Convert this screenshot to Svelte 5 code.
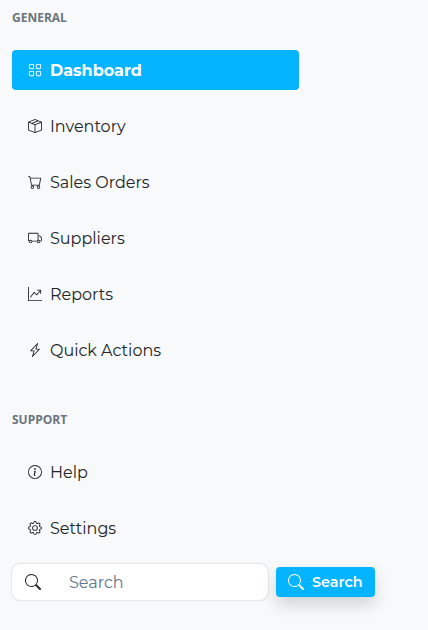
<script>
  const icons = {
    grid: 'M1 2.5A1.5 1.5 0 0 1 2.5 1h3A1.5 1.5 0 0 1 7 2.5v3A1.5 1.5 0 0 1 5.5 7h-3A1.5 1.5 0 0 1 1 5.5zM2.5 2a.5.5 0 0 0-.5.5v3a.5.5 0 0 0 .5.5h3a.5.5 0 0 0 .5-.5v-3a.5.5 0 0 0-.5-.5zm6.5.5A1.5 1.5 0 0 1 10.5 1h3A1.5 1.5 0 0 1 15 2.5v3A1.5 1.5 0 0 1 13.5 7h-3A1.5 1.5 0 0 1 9 5.5zm1.5-.5a.5.5 0 0 0-.5.5v3a.5.5 0 0 0 .5.5h3a.5.5 0 0 0 .5-.5v-3a.5.5 0 0 0-.5-.5zM1 10.5A1.5 1.5 0 0 1 2.5 9h3A1.5 1.5 0 0 1 7 10.5v3A1.5 1.5 0 0 1 5.5 15h-3A1.5 1.5 0 0 1 1 13.5zm1.5-.5a.5.5 0 0 0-.5.5v3a.5.5 0 0 0 .5.5h3a.5.5 0 0 0 .5-.5v-3a.5.5 0 0 0-.5-.5zm6.5.5A1.5 1.5 0 0 1 10.5 9h3a1.5 1.5 0 0 1 1.5 1.5v3a1.5 1.5 0 0 1-1.5 1.5h-3A1.5 1.5 0 0 1 9 13.5zm1.5-.5a.5.5 0 0 0-.5.5v3a.5.5 0 0 0 .5.5h3a.5.5 0 0 0 .5-.5v-3a.5.5 0 0 0-.5-.5z',
    box: 'M8.186 1.113a.5.5 0 0 0-.372 0L1.846 3.5l2.404.961L10.404 2zm3.564 1.426L5.596 5 8 5.961 14.154 3.5zm3.25 1.7-6.5 2.6v7.922l6.5-2.6V4.24zM7.5 14.762V6.838L1 4.239v7.923zM7.443.184a1.5 1.5 0 0 1 1.114 0l7.129 2.852A.5.5 0 0 1 16 3.5v8.662a1 1 0 0 1-.629.928l-7.185 2.874a.5.5 0 0 1-.372 0L.63 13.09a1 1 0 0 1-.63-.928V3.5a.5.5 0 0 1 .314-.464z',
    cart: 'M0 1.5A.5.5 0 0 1 .5 1H2a.5.5 0 0 1 .485.379L2.89 3H14.5a.5.5 0 0 1 .491.592l-1.5 8A.5.5 0 0 1 13 12H4a.5.5 0 0 1-.491-.408L2.01 3.607 1.61 2H.5a.5.5 0 0 1-.5-.5M3.102 4l1.313 7h8.17l1.313-7zM5 12a2 2 0 1 0 0 4 2 2 0 0 0 0-4m7 0a2 2 0 1 0 0 4 2 2 0 0 0 0-4m-7 1a1 1 0 1 1 0 2 1 1 0 0 1 0-2m7 0a1 1 0 1 1 0 2 1 1 0 0 1 0-2',
    truck: 'M0 3.5A1.5 1.5 0 0 1 1.5 2h9A1.5 1.5 0 0 1 12 3.5V5h1.02a1.5 1.5 0 0 1 1.17.563l1.481 1.85a1.5 1.5 0 0 1 .329.938V10.5a1.5 1.5 0 0 1-1.5 1.5H14a2 2 0 1 1-4 0H5a2 2 0 1 1-3.998-.085A1.5 1.5 0 0 1 0 10.5zm1.294 7.456A2 2 0 0 1 4.732 11h5.536a2 2 0 0 1 .732-.732V3.5a.5.5 0 0 0-.5-.5h-9a.5.5 0 0 0-.5.5v7a.5.5 0 0 0 .294.456M12 10a2 2 0 0 1 1.732 1h.768a.5.5 0 0 0 .5-.5V8.35a.5.5 0 0 0-.11-.312l-1.48-1.85A.5.5 0 0 0 13.02 6H12zm-9 1a1 1 0 1 0 0 2 1 1 0 0 0 0-2m9 0a1 1 0 1 0 0 2 1 1 0 0 0 0-2',
    graph: 'M0 0h1v15h15v1H0zm10 3.5a.5.5 0 0 1 .5-.5h4a.5.5 0 0 1 .5.5v4a.5.5 0 0 1-1 0V4.9l-3.613 4.417a.5.5 0 0 1-.74.037L7.06 6.767l-3.656 5.027a.5.5 0 0 1-.808-.588l4-5.5a.5.5 0 0 1 .758-.06l2.609 2.61L13.445 4H10.5a.5.5 0 0 1-.5-.5',
    bolt: 'M11.251.068a.5.5 0 0 1 .227.58L9.677 6.5H13a.5.5 0 0 1 .364.843l-8 8.5a.5.5 0 0 1-.842-.49L6.323 9.5H3a.5.5 0 0 1-.364-.843l8-8.5a.5.5 0 0 1 .615-.09zM4.157 8.5H7a.5.5 0 0 1 .478.647L6.11 13.59l5.732-6.09H9a.5.5 0 0 1-.478-.647L9.89 2.41z',
    info: 'M8 15A7 7 0 1 1 8 1a7 7 0 0 1 0 14m0 1A8 8 0 1 0 8 0a8 8 0 0 0 0 16M8.93 6.588l-2.29.287-.082.38.45.083c.294.07.352.176.288.469l-.738 3.468c-.194.897.105 1.319.808 1.319.545 0 1.178-.252 1.465-.598l.088-.416c-.2.176-.492.246-.686.246-.275 0-.375-.193-.304-.533zM9 4.5a1 1 0 1 1-2 0 1 1 0 0 1 2 0',
    gear: 'M8 4.754a3.246 3.246 0 1 0 0 6.492 3.246 3.246 0 0 0 0-6.492M5.754 8a2.246 2.246 0 1 1 4.492 0 2.246 2.246 0 0 1-4.492 0M9.796 1.343c-.527-1.79-3.065-1.79-3.592 0l-.094.319a.873.873 0 0 1-1.255.52l-.292-.16c-1.64-.892-3.433.902-2.54 2.541l.159.292a.873.873 0 0 1-.52 1.255l-.319.094c-1.79.527-1.79 3.065 0 3.592l.319.094a.873.873 0 0 1 .52 1.255l-.16.292c-.892 1.64.901 3.434 2.541 2.54l.292-.159a.873.873 0 0 1 1.255.52l.094.319c.527 1.79 3.065 1.79 3.592 0l.094-.319a.873.873 0 0 1 1.255-.52l.292.16c1.64.893 3.434-.902 2.54-2.541l-.159-.292a.873.873 0 0 1 .52-1.255l.319-.094c1.79-.527 1.79-3.065 0-3.592l-.319-.094a.873.873 0 0 1-.52-1.255l.16-.292c.893-1.64-.902-3.433-2.541-2.54l-.292.159a.873.873 0 0 1-1.255-.52zm-2.633.283c.246-.835 1.428-.835 1.674 0l.094.319a1.873 1.873 0 0 0 2.693 1.115l.291-.16c.764-.415 1.6.42 1.184 1.185l-.159.292a1.873 1.873 0 0 0 1.116 2.692l.318.094c.835.246.835 1.428 0 1.674l-.319.094a1.873 1.873 0 0 0-1.115 2.693l.16.291c.415.764-.42 1.6-1.185 1.184l-.291-.159a1.873 1.873 0 0 0-2.693 1.116l-.094.318c-.246.835-1.428.835-1.674 0l-.094-.319a1.873 1.873 0 0 0-2.692-1.115l-.292.16c-.764.415-1.6-.42-1.184-1.185l.159-.291A1.873 1.873 0 0 0 1.945 8.93l-.319-.094c-.835-.246-.835-1.428 0-1.674l.319-.094A1.873 1.873 0 0 0 3.06 4.377l-.16-.292c-.415-.764.42-1.6 1.185-1.184l.292.159a1.873 1.873 0 0 0 2.692-1.115z',
    search: 'M11.742 10.344a6.5 6.5 0 1 0-1.397 1.398h-.001q.044.06.098.115l3.85 3.85a1 1 0 0 0 1.415-1.414l-3.85-3.85a1 1 0 0 0-.115-.1zM12 6.5a5.5 5.5 0 1 1-11 0 5.5 5.5 0 0 1 11 0'
  };

  const sections = [
    {
      title: 'GENERAL',
      items: [
        { label: 'Dashboard', icon: 'grid', active: true },
        { label: 'Inventory', icon: 'box' },
        { label: 'Sales Orders', icon: 'cart' },
        { label: 'Suppliers', icon: 'truck' },
        { label: 'Reports', icon: 'graph' },
        { label: 'Quick Actions', icon: 'bolt' }
      ]
    },
    {
      title: 'SUPPORT',
      items: [
        { label: 'Help', icon: 'info' },
        { label: 'Settings', icon: 'gear' }
      ]
    }
  ];
</script>

{#snippet icon(name, size)}
  <svg width={size} height={size} viewBox="0 0 16 16" fill="currentColor" aria-hidden="true">
    <path d={icons[name]} />
  </svg>
{/snippet}

<aside class="sidebar">
  {#each sections as section}
    <nav class="section">
      <h2>{section.title}</h2>
      <ul>
        {#each section.items as item}
          <li class:active={item.active}>
            {@render icon(item.icon, 14)}
            <span>{item.label}</span>
          </li>
        {/each}
      </ul>
    </nav>
  {/each}

  <form class="search">
    <label class="field">
      {@render icon('search', 16)}
      <input type="text" placeholder="Search" />
    </label>
    <button type="button">
      {@render icon('search', 16)}
      <span>Search</span>
    </button>
  </form>
</aside>

<style>
  :global(body) {
    background: #f8f9fb;
  }

  .sidebar {
    box-sizing: border-box;
    height: 630px;
    padding: 9px 12px 0;
    font-family: Montserrat, Inter, sans-serif;
    color: #212529;
    overflow: hidden;
  }

  h2 {
    margin: 0 0 23px;
    font: 700 12px/18px 'Open Sans', sans-serif;
    color: #6c757d;
  }

  .section + .section {
    margin-top: 41px;
  }

  ul {
    margin: 0;
    padding: 0;
    list-style: none;
    display: flex;
    flex-direction: column;
    gap: 16px;
    width: 287px;
  }

  li {
    box-sizing: border-box;
    height: 40px;
    padding: 0 16px;
    display: flex;
    align-items: center;
    gap: 8px;
    border-radius: 4px;
    font-size: 16px;
    line-height: 24px;
    white-space: nowrap;
  }

  li span {
    padding-top: 2px;
  }

  li.active {
    background: #05b4ff;
    color: #fff;
    font-weight: 700;
  }

  svg {
    flex: none;
    display: block;
  }

  .search {
    display: flex;
    align-items: center;
    gap: 8px;
    margin: 16px 0 0;
  }

  .field {
    box-sizing: border-box;
    width: 256px;
    height: 36px;
    padding-left: 13px;
    display: flex;
    align-items: center;
    gap: 28px;
    border-radius: 8px;
    background: #fff;
    box-shadow: 0 0 2px rgba(0, 0, 0, 0.25);
  }

  input {
    min-width: 0;
    width: 180px;
    padding: 2px 0 0;
    border: 0;
    outline: 0;
    background: transparent;
    font: 400 16px/24px Montserrat, Inter, sans-serif;
  }

  input::placeholder {
    color: #64748b;
    opacity: 1;
  }

  button {
    box-sizing: border-box;
    width: 99px;
    height: 30px;
    padding: 0 0 0 12px;
    display: flex;
    align-items: center;
    gap: 8px;
    border: 0;
    border-radius: 4px;
    background: #05b4ff;
    color: #fff;
    font: 600 14.4px/21px Montserrat, Inter, sans-serif;
    box-shadow: 0 8px 16px rgba(0, 0, 0, 0.15);
  }
</style>
